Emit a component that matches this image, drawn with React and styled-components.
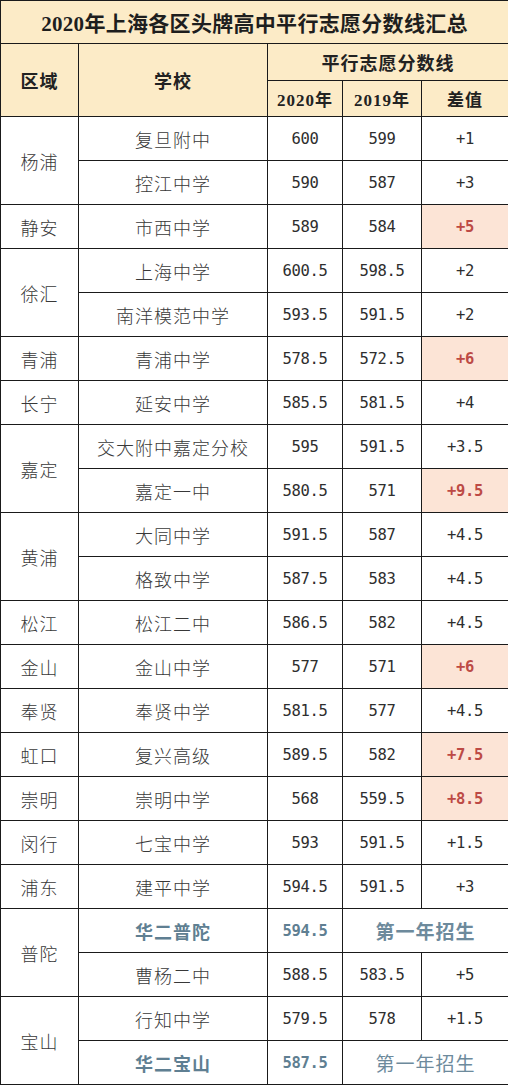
import styled, { createGlobalStyle } from 'styled-components';

const GlobalStyle = createGlobalStyle`
	html, body {
		margin: 0;
		padding: 0;
		background: #fff;
	}
`;

const rows = [
	{ region: '杨浦', span: 2, school: '复旦附中', y20: '600', y19: '599', diff: '+1' },
	{ school: '控江中学', y20: '590', y19: '587', diff: '+3' },
	{ region: '静安', span: 1, school: '市西中学', y20: '589', y19: '584', diff: '+5', hot: true },
	{ region: '徐汇', span: 2, school: '上海中学', y20: '600.5', y19: '598.5', diff: '+2' },
	{ school: '南洋模范中学', y20: '593.5', y19: '591.5', diff: '+2' },
	{ region: '青浦', span: 1, school: '青浦中学', y20: '578.5', y19: '572.5', diff: '+6', hot: true },
	{ region: '长宁', span: 1, school: '延安中学', y20: '585.5', y19: '581.5', diff: '+4' },
	{ region: '嘉定', span: 2, school: '交大附中嘉定分校', y20: '595', y19: '591.5', diff: '+3.5' },
	{ school: '嘉定一中', y20: '580.5', y19: '571', diff: '+9.5', hot: true },
	{ region: '黄浦', span: 2, school: '大同中学', y20: '591.5', y19: '587', diff: '+4.5' },
	{ school: '格致中学', y20: '587.5', y19: '583', diff: '+4.5' },
	{ region: '松江', span: 1, school: '松江二中', y20: '586.5', y19: '582', diff: '+4.5' },
	{ region: '金山', span: 1, school: '金山中学', y20: '577', y19: '571', diff: '+6', hot: true },
	{ region: '奉贤', span: 1, school: '奉贤中学', y20: '581.5', y19: '577', diff: '+4.5' },
	{ region: '虹口', span: 1, school: '复兴高级', y20: '589.5', y19: '582', diff: '+7.5', hot: true },
	{ region: '崇明', span: 1, school: '崇明中学', y20: '568', y19: '559.5', diff: '+8.5', hot: true },
	{ region: '闵行', span: 1, school: '七宝中学', y20: '593', y19: '591.5', diff: '+1.5' },
	{ region: '浦东', span: 1, school: '建平中学', y20: '594.5', y19: '591.5', diff: '+3' },
	{ region: '普陀', span: 2, school: '华二普陀', y20: '594.5', fresh: true },
	{ school: '曹杨二中', y20: '588.5', y19: '583.5', diff: '+5' },
	{ region: '宝山', span: 2, school: '行知中学', y20: '579.5', y19: '578', diff: '+1.5' },
	{ school: '华二宝山', y20: '587.5', fresh: true },
];

const Table = styled.table`
	width: 508px;
	table-layout: fixed;
	border-collapse: collapse;
	font-family: 'Liberation Serif', 'Noto Sans CJK SC', serif;
	color: #3c3c3c;
`;

const TitleCell = styled.th`
	height: 42px;
	padding: 0;
	background: #fcebc7;
	border: 1px solid #1a1a1a;
	font-size: 21px;
	font-weight: 700;
	color: #1e1e1e;
	text-align: center;
	letter-spacing: 0.3px;
`;

const HeadCell = styled.th`
	height: ${({ $h }) => $h}px;
	padding: 0;
	background: #fcebc7;
	border: 1px solid #1a1a1a;
	font-size: ${({ $size }) => $size || 18}px;
	font-weight: 700;
	color: #222;
	text-align: center;
	letter-spacing: 1px;
`;

const Cell = styled.td`
	height: 43px;
	padding: 0;
	border: 1px solid #1a1a1a;
	background: ${({ $hot }) => ($hot ? '#fce4d6' : '#fff')};
	text-align: center;
	font-family: 'Noto Sans CJK SC', sans-serif;
	font-weight: ${({ $fresh }) => ($fresh ? 700 : 300)};
	font-size: 18px;
	color: ${({ $fresh }) => ($fresh ? '#5f7f92' : '#383838')};
	letter-spacing: 1px;
`;

const NumCell = styled(Cell)`
	font-family: 'DejaVu Sans Mono', 'Liberation Mono', monospace;
	font-size: 15.5px;
	letter-spacing: -0.3px;
	font-weight: ${({ $fresh, $hot }) => ($fresh || $hot ? 700 : 400)};
	color: ${({ $hot, $fresh }) => ($hot ? '#bd4a45' : $fresh ? '#5f7f92' : '#2e2e2e')};
`;

const FreshCell = styled(Cell)`
	font-family: 'Liberation Serif', 'Noto Sans CJK SC', serif;
	font-weight: ${({ $bold }) => ($bold ? 700 : 400)};
	color: #6d8a9c;
	font-size: 19px;
	letter-spacing: 1px;
`;

export default function App() {
	return (
		<>
			<GlobalStyle />
			<Table>
				<colgroup>
					<col style={{ width: 78 }} />
					<col style={{ width: 189 }} />
					<col style={{ width: 75 }} />
					<col style={{ width: 79 }} />
					<col style={{ width: 87 }} />
				</colgroup>
				<thead>
					<tr>
						<TitleCell colSpan={5}>2020年上海各区头牌高中平行志愿分数线汇总</TitleCell>
					</tr>
					<tr>
						<HeadCell $h={36} rowSpan={2}>区域</HeadCell>
						<HeadCell $h={36} rowSpan={2}>学校</HeadCell>
						<HeadCell $h={36} colSpan={3}>平行志愿分数线</HeadCell>
					</tr>
					<tr>
						<HeadCell $h={35} $size={17}>2020年</HeadCell>
						<HeadCell $h={35} $size={17}>2019年</HeadCell>
						<HeadCell $h={35} $size={17}>差值</HeadCell>
					</tr>
				</thead>
				<tbody>
					{rows.map((r, i) => (
						<tr key={i}>
							{r.region && <Cell rowSpan={r.span}>{r.region}</Cell>}
							<Cell $fresh={r.fresh}>{r.school}</Cell>
							<NumCell $fresh={r.fresh}>{r.y20}</NumCell>
							{r.fresh ? (
								<FreshCell colSpan={2} $bold={i < 20}>第一年招生</FreshCell>
							) : (
								<>
									<NumCell>{r.y19}</NumCell>
									<NumCell $hot={r.hot}>{r.diff}</NumCell>
								</>
							)}
						</tr>
					))}
				</tbody>
			</Table>
		</>
	);
}
